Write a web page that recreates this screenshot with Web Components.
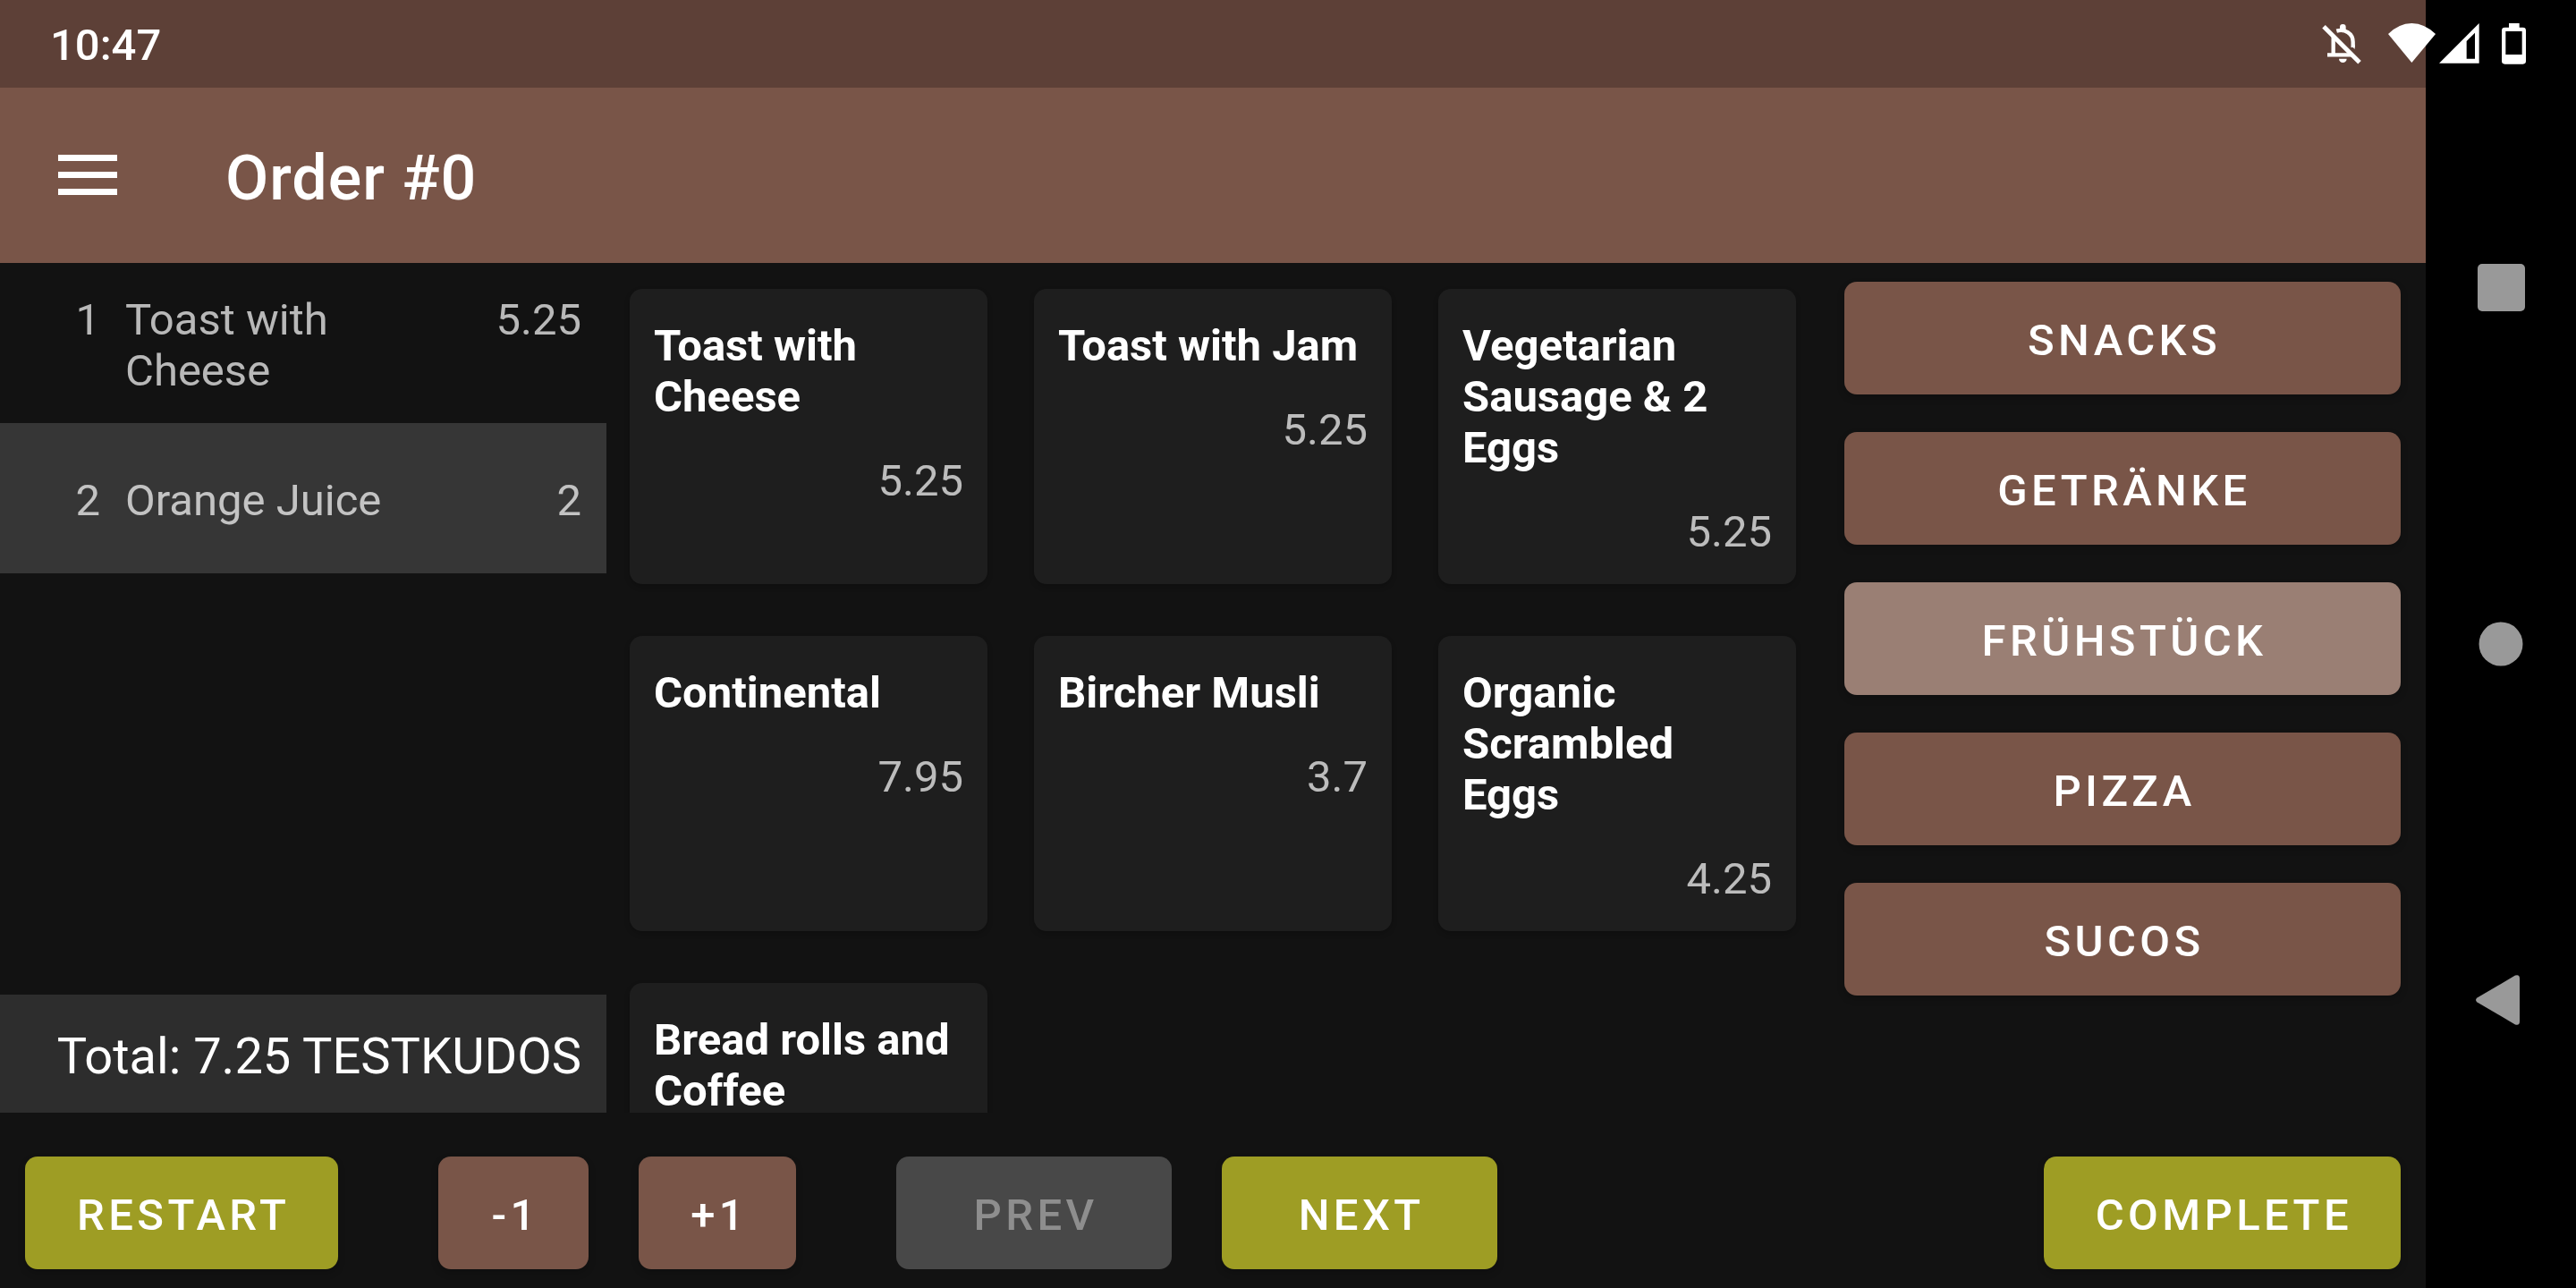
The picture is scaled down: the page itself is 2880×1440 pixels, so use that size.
<!DOCTYPE html>
<html lang="en">
<head>
<meta charset="utf-8">
<title>Order #0</title>
<style>
  html, body { margin: 0; height: 100%; }
  body { background: #121212; color: #fff; font: 400 49px/57px Roboto, "Noto Sans", sans-serif; }
</style>
</head>
<body>
<pos-screen>
  <status-bar slot="status">10:47</status-bar>
  <app-toolbar slot="toolbar">Order #0</app-toolbar>
  <order-panel slot="order">
    <order-line qty="1" price="5.25">Toast with Cheese</order-line>
    <order-line qty="2" price="2" selected>Orange Juice</order-line>
    <span slot="total">Total: 7.25 TESTKUDOS</span>
  </order-panel>
  <product-grid slot="products">
    <product-card price="5.25">Toast with Cheese</product-card>
    <product-card price="5.25">Toast with Jam</product-card>
    <product-card price="5.25">Vegetarian Sausage &amp; 2 Eggs</product-card>
    <product-card price="7.95">Continental</product-card>
    <product-card price="3.7">Bircher Musli</product-card>
    <product-card price="4.25">Organic Scrambled Eggs</product-card>
    <product-card>Bread rolls and Coffee</product-card>
  </product-grid>
  <category-list slot="categories">
    <pos-button>SNACKS</pos-button>
    <pos-button>GETRÄNKE</pos-button>
    <pos-button selected>FRÜHSTÜCK</pos-button>
    <pos-button>PIZZA</pos-button>
    <pos-button>SUCOS</pos-button>
  </category-list>
  <action-bar slot="actions">
    <pos-button accent>RESTART</pos-button>
    <pos-button slot="quantity">-1</pos-button>
    <pos-button slot="quantity">+1</pos-button>
    <pos-button slot="paging" wide disabled>PREV</pos-button>
    <pos-button slot="paging" wide accent>NEXT</pos-button>
    <pos-button slot="finish" accent>COMPLETE</pos-button>
  </action-bar>
  <system-nav slot="nav"></system-nav>
</pos-screen>

<script>
function define(name, markup, setup) {
  const template = document.createElement('template');
  template.innerHTML = markup;
  customElements.define(name, class extends HTMLElement {
    constructor() {
      super();
      this.attachShadow({ mode: 'open' }).append(template.content.cloneNode(true));
    }
    connectedCallback() { if (setup) setup(this, this.shadowRoot); }
  });
}

define('pos-screen', `
  <style>
    :host { display: grid; grid-template: auto auto minmax(0, 1fr) auto / minmax(0, 1fr) 168px; height: 100vh; overflow: hidden; }
    ::slotted([slot=status]) { grid-area: 1 / 1 / 2 / 3; z-index: 1; }
    ::slotted([slot=toolbar]) { grid-area: 2 / 1; }
    main { grid-area: 3 / 1; display: grid; grid-template-columns: 1fr 2fr 1fr; grid-template-rows: minmax(0, 1fr); }
    ::slotted([slot=actions]) { grid-area: 4 / 1; }
    ::slotted([slot=nav]) { grid-area: 1 / 2 / 5 / 3; }
  </style>
  <slot name="status"></slot>
  <slot name="toolbar"></slot>
  <main><slot name="order"></slot><slot name="products"></slot><slot name="categories"></slot></main>
  <slot name="actions"></slot>
  <slot name="nav"></slot>`);

define('status-bar', `
  <style>
    :host { display: flex; justify-content: space-between; height: 98px; box-sizing: border-box; padding: 0 56px;
      font-weight: 500; background: linear-gradient(to right, #5d4037 calc(100% - 168px), transparent 0); }
    time { padding-top: 22px; }
    .icons { display: flex; align-items: flex-start; padding-top: 26px; }
    svg { display: block; fill: #fff; }
    .bell { margin-right: 30px; }
    .wifi { margin-right: 4px; }
    .signal { margin-right: 25px; }
  </style>
  <time><slot></slot></time>
  <div class="icons">
    <svg class="bell" width="44" height="46" viewBox="108 79 132 138">
      <g fill="none" stroke="#fff">
        <path stroke-width="13" d="M146 124V184M126 185H212"/>
        <path stroke-width="13" d="M157 105C184 97 212 112 212 142V160"/>
        <path stroke-width="15" d="M114 90L234 210"/>
      </g>
      <path d="M168 101V92a10 10 0 0 1 20 0V101ZM165 198h26a13 13 0 0 1-26 0ZM206 154L218 166V150Z"/>
    </svg>
    <svg class="wifi" width="53" height="44" viewBox="330 79 159 132"><path d="M409 211L330 115Q365 80 409 79Q453 80 489 115Z"/></svg>
    <svg class="signal" width="45" height="45" viewBox="502 79 135 135"><path fill-rule="evenodd" d="M502 213L636 79V213ZM594 139V198H622V111Z"/></svg>
    <svg width="27" height="46" viewBox="711 79 81 138"><path fill-rule="evenodd" d="M735 79H770V93H782Q792 93 792 103V206Q792 216 782 216H721Q711 216 711 206V103Q711 93 721 93H735ZM724 106V184H779V106Z"/></svg>
  </div>`);

define('app-toolbar', `
  <style>
    :host { display: flex; align-items: center; gap: 56px; height: 196px; background: #795548; }
    button { display: grid; place-items: center; width: 196px; height: 196px; padding: 0; border: 0; background: none; }
    h1 { margin: 0; padding-top: 5px; font-size: 70px; line-height: 82px; font-weight: 500; letter-spacing: 1px; }
  </style>
  <button type="button" aria-label="Open menu">
    <svg width="66" height="46" fill="#fff"><path d="M0 0H66V7H0ZM0 19H66V26H0ZM0 38H66V45H0Z"/></svg>
  </button>
  <h1><slot></slot></h1>`);

define('order-panel', `
  <style>
    :host { display: flex; flex-direction: column; }
    .lines { flex: 1; min-height: 0; overflow: hidden; }
    footer { padding: 36px 28px 30px; background: #2d2d2d; font-size: 56px; line-height: 66px; text-align: right; white-space: nowrap; }
  </style>
  <div class="lines" role="list"><slot></slot></div>
  <footer><slot name="total"></slot></footer>`);

define('order-line', `
  <style>
    :host { display: grid; grid-template-columns: 84px 1fr auto; column-gap: 28px; align-content: center;
      box-sizing: border-box; min-height: 168px; padding: 35px 28px 30px 28px; color: rgba(255, 255, 255, .7); }
    :host([selected]) { background: #363636; }
    .qty, .price { text-align: right; }
  </style>
  <span class="qty"></span><span><slot></slot></span><span class="price"></span>`,
  (host, root) => {
    host.setAttribute('role', 'listitem');
    root.querySelector('.qty').textContent = host.getAttribute('qty');
    root.querySelector('.price').textContent = host.getAttribute('price');
  });

define('product-grid', `
  <style>
    :host { display: grid; grid-template-columns: repeat(3, minmax(0, 1fr)); grid-auto-rows: 330px; gap: 58px 52px;
      padding: 29px 26px 0; overflow: hidden; }
  </style>
  <slot></slot>`);

define('product-card', `
  <style>
    :host { display: grid; }
    button { display: flex; flex-direction: column; gap: 37px; padding: 35px 27px 30px; border: 0; border-radius: 14px;
      background: #1e1e1e; box-shadow: 0 3px 6px rgba(0, 0, 0, .2); color: #fff; font: inherit; text-align: left; }
    .name { font-weight: 700; }
    .price { align-self: flex-end; color: rgba(255, 255, 255, .7); }
  </style>
  <button type="button"><span class="name"><slot></slot></span><span class="price"></span></button>`,
  (host, root) => { root.querySelector('.price').textContent = host.getAttribute('price') || ''; });

define('category-list', `
  <style>
    :host { display: flex; flex-direction: column; gap: 42px; padding: 21px 28px; }
  </style>
  <slot></slot>`);

define('pos-button', `
  <style>
    :host { display: grid; }
    button { height: 126px; min-width: 168px; padding: 4px 54px 0 58px; border: 0; border-radius: 14px; background: #795548;
      box-shadow: 0 4px 8px rgba(0, 0, 0, .2); color: #fff; font: inherit; font-weight: 500; letter-spacing: .09em; white-space: nowrap; }
    :host([wide]) button { min-width: 308px; }
    :host([accent]) button { background: #9e9d24; }
    :host([selected]) button { background: #9a7f74; }
    button:disabled { background: #484848; color: #8e8e8e; box-shadow: none; }
  </style>
  <button type="button"><slot></slot></button>`,
  (host, root) => {
    const button = root.querySelector('button');
    button.disabled = host.hasAttribute('disabled');
    if (host.hasAttribute('selected')) button.setAttribute('aria-pressed', 'true');
  });

define('action-bar', `
  <style>
    :host { display: flex; gap: 112px; padding: 49px 28px 21px; }
    div { display: flex; gap: 56px; }
    .finish { margin-left: auto; }
  </style>
  <div><slot></slot></div>
  <div><slot name="quantity"></slot></div>
  <div><slot name="paging"></slot></div>
  <div class="finish"><slot name="finish"></slot></div>`);

define('system-nav', `
  <style>
    :host { display: flex; flex-direction: column; justify-content: center; gap: 231px; background: #000; }
    button { display: grid; place-items: center; height: 168px; padding: 0; border: 0; background: none; }
    svg { fill: #999; }
  </style>
  <button type="button" aria-label="Overview"><svg width="53" height="53"><rect width="53" height="53" rx="5"/></svg></button>
  <button type="button" aria-label="Home"><svg width="54" height="54"><circle cx="27" cy="27" r="24.5"/></svg></button>
  <button type="button" aria-label="Back"><svg width="56" height="58" viewBox="0 0 56 58"><path d="M1.5 25.5L44 .6Q49 -1 49 4V52Q49 57 44 55.400L1.500 30.500Q-1.500 28 1.500 25.500Z"/></svg></button>`);
</script>
</body>
</html>
